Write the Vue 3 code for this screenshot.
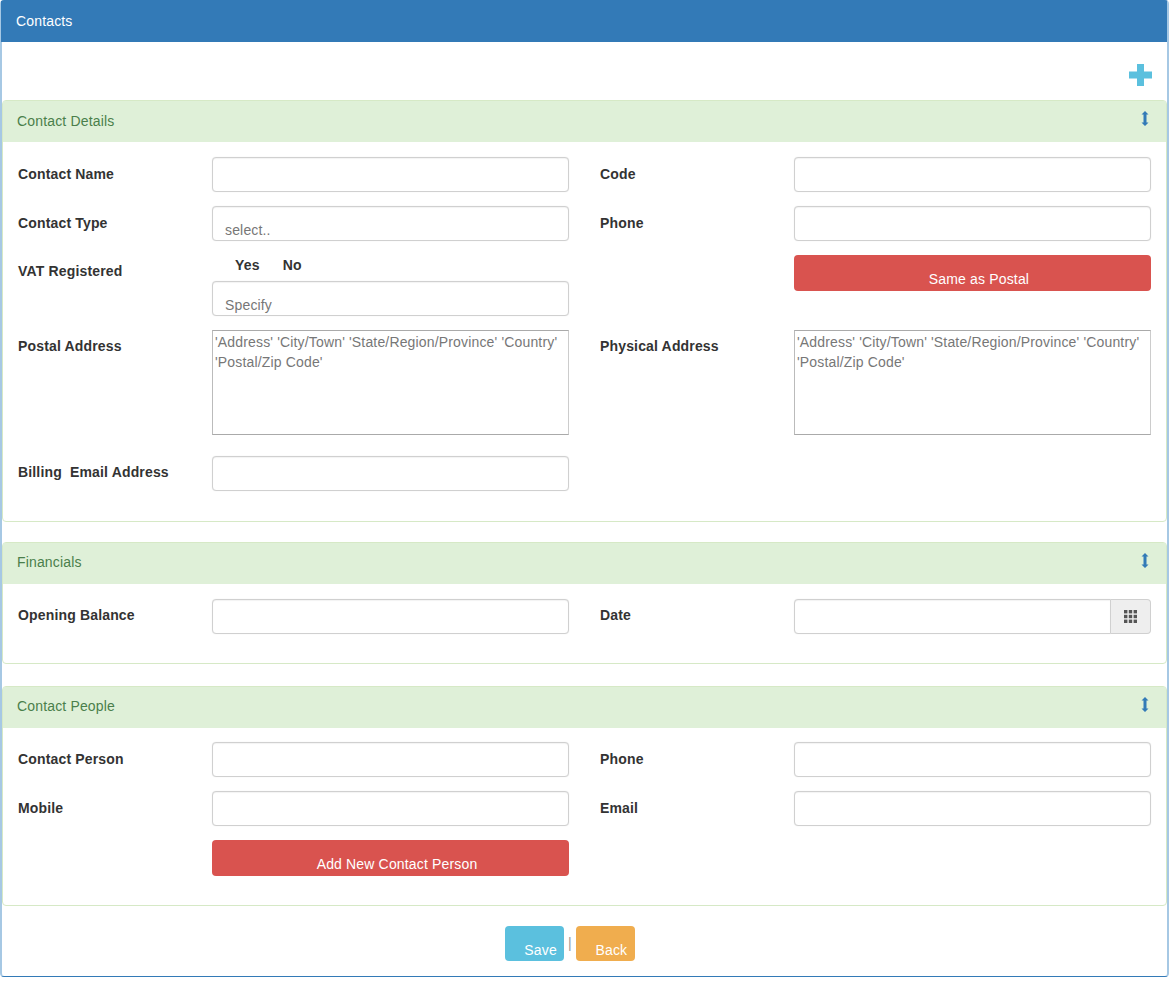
<template>
  <div class="panel">
    <div class="panel-head">Contacts</div>

    <div class="add-bar">
      <svg class="add-icon" width="23" height="22" viewBox="0 0 23 22">
        <path d="M8 0h7v7.500h8v7h-8V22H8v-7.500H0v-7h8z" fill="#5bc0de" />
      </svg>
    </div>

    <section class="sub-panel first">
      <div class="sub-head">
        <span class="sub-title">Contact Details</span>
        <svg class="toggle" width="8" height="15" viewBox="0 0 8 15">
          <path d="M4 0l3.500 3.600H5.500v7.800h2L4 15 .5 11.400h2V3.600h-2z" fill="#337ab7" />
        </svg>
      </div>
      <div class="sub-body">
        <div class="row">
          <div class="field">
            <label>Contact Name</label>
            <input class="text-input" type="text" />
          </div>
          <div class="field right">
            <label>Code</label>
            <input class="text-input" type="text" />
          </div>
        </div>
        <div class="row">
          <div class="field">
            <label>Contact Type</label>
            <input class="text-input low" type="text" placeholder="select.." />
          </div>
          <div class="field right">
            <label>Phone</label>
            <input class="text-input" type="text" />
          </div>
        </div>
        <div class="row">
          <div class="field">
            <label class="up">VAT Registered</label>
            <div>
              <div class="yes-no">
                <span>Yes</span>
                <span>No</span>
              </div>
              <input class="text-input low" type="text" placeholder="Specify" />
            </div>
          </div>
          <div class="field right">
            <span></span>
            <button class="btn btn-danger" type="button">Same as Postal</button>
          </div>
        </div>
        <div class="row address-row">
          <div class="field">
            <label class="up">Postal Address</label>
            <textarea class="area" :placeholder="addressHint"></textarea>
          </div>
          <div class="field right">
            <label class="up">Physical Address</label>
            <textarea class="area" :placeholder="addressHint"></textarea>
          </div>
        </div>
        <div class="row last">
          <div class="field">
            <label class="up">Billing&nbsp; Email Address</label>
            <input class="text-input" type="text" />
          </div>
        </div>
      </div>
    </section>

    <section class="sub-panel second">
      <div class="sub-head">
        <span class="sub-title">Financials</span>
        <svg class="toggle" width="8" height="15" viewBox="0 0 8 15">
          <path d="M4 0l3.500 3.600H5.500v7.800h2L4 15 .5 11.400h2V3.600h-2z" fill="#337ab7" />
        </svg>
      </div>
      <div class="sub-body">
        <div class="row last">
          <div class="field">
            <label class="up">Opening Balance</label>
            <input class="text-input" type="text" />
          </div>
          <div class="field right">
            <label class="up">Date</label>
            <div class="input-group">
              <input class="text-input" type="text" />
              <span class="addon">
                <svg width="13" height="13" viewBox="0 0 13 13" fill="#555">
                  <rect v-for="c in cells" :key="c.id" :x="c.x" :y="c.y" width="3.400" height="3.400" />
                </svg>
              </span>
            </div>
          </div>
        </div>
      </div>
    </section>

    <section class="sub-panel third">
      <div class="sub-head">
        <span class="sub-title">Contact People</span>
        <svg class="toggle" width="8" height="15" viewBox="0 0 8 15">
          <path d="M4 0l3.500 3.600H5.500v7.800h2L4 15 .5 11.400h2V3.600h-2z" fill="#337ab7" />
        </svg>
      </div>
      <div class="sub-body">
        <div class="row">
          <div class="field">
            <label>Contact Person</label>
            <input class="text-input" type="text" />
          </div>
          <div class="field right">
            <label>Phone</label>
            <input class="text-input" type="text" />
          </div>
        </div>
        <div class="row">
          <div class="field">
            <label>Mobile</label>
            <input class="text-input" type="text" />
          </div>
          <div class="field right">
            <label>Email</label>
            <input class="text-input" type="text" />
          </div>
        </div>
        <div class="row last">
          <div class="field">
            <span></span>
            <button class="btn btn-danger" type="button">Add New Contact Person</button>
          </div>
        </div>
      </div>
    </section>

    <div class="actions">
      <button class="btn btn-info" type="button">Save</button>
      <span class="sep">|</span>
      <button class="btn btn-warning" type="button">Back</button>
    </div>
  </div>
</template>

<script setup>
const addressHint =
  "'Address' 'City/Town' 'State/Region/Province' 'Country' 'Postal/Zip Code'";

// 3x3 squares of the calendar icon
const cells = [];
for (let row = 0; row < 3; row++) {
  for (let col = 0; col < 3; col++) {
    cells.push({ id: row * 3 + col, x: col * 4.8, y: row * 4.8 });
  }
}
</script>

<style>
html,
body {
  margin: 0;
  background: #fff;
}
</style>

<style scoped>
.panel {
  box-sizing: border-box;
  width: 1169px;
  height: 977px;
  border: 1px solid #337ab7;
  border-left: 2px solid #a6c8e4;
  border-right: 2px solid #a6c8e4;
  border-radius: 4px;
  background: #fff;
  font-family: "Liberation Sans", Arial, sans-serif;
  font-size: 14px;
  line-height: 20px;
  letter-spacing: 0.16px;
  color: #333;
}

.panel-head {
  height: 41px;
  margin-left: -1px;
  padding: 10px 15px 0;
  box-sizing: border-box;
  background: #337ab7;
  color: #fff;
}

.add-bar {
  display: flex;
  justify-content: flex-end;
  height: 58px;
  box-sizing: border-box;
  padding: 22px 15px 0 0;
}

.sub-panel {
  border: 1px solid #d6e9c6;
  border-radius: 4px;
}

.first {
  margin-bottom: 20px;
}

.second {
  margin-bottom: 22px;
}

.sub-head {
  display: flex;
  justify-content: space-between;
  align-items: center;
  height: 41px;
  padding: 0 14px;
  background: #dff0d8;
  color: #4a7f4b;
}

.sub-title {
  padding-bottom: 3px;
}

.first .sub-title {
  padding-bottom: 1px;
}

.toggle {
  margin: -7px 3px 0 0;
}

.sub-body {
  padding: 15px 14px 0;
}

.third .sub-body {
  padding-top: 14px;
}

.row {
  display: flex;
  gap: 31px;
  margin-bottom: 14px;
}

.address-row {
  margin-bottom: 21px;
}

.row.last {
  margin-bottom: 29px;
}

.first .row.last {
  margin-bottom: 30px;
}

.field {
  display: grid;
  grid-template-columns: 195px 357px;
  align-items: start;
}

.field.right {
  grid-template-columns: 194px 357px;
}

label {
  display: block;
  height: 35px;
  padding-left: 1px;
  line-height: 34px;
  font-weight: 700;
}

.right label {
  padding-left: 0;
}

label.up {
  line-height: 32px;
}

.text-input {
  display: block;
  box-sizing: border-box;
  width: 100%;
  height: 35px;
  padding: 0 12px;
  border: 1px solid #d0d0d0;
  border-radius: 4px;
  box-shadow: inset 0 1px 1px rgba(0, 0, 0, 0.05), 0 0 1px rgba(0, 0, 0, 0.12);
  font: inherit;
  letter-spacing: inherit;
  color: #555;
  background: #fff;
}

.text-input.low {
  padding-top: 13px;
}

.text-input::placeholder,
.area::placeholder {
  color: #777;
  opacity: 1;
}

.yes-no {
  display: flex;
  height: 26px;
  padding: 0 0 0 23px;
  gap: 23px;
  font-weight: 700;
}

.area {
  display: block;
  box-sizing: border-box;
  width: 100%;
  height: 105px;
  padding: 1px 2px;
  border: 1px solid;
  border-color: #aaa #ccc #aaa #bbb;
  border-radius: 0;
  font: inherit;
  letter-spacing: inherit;
  resize: none;
  outline: none;
}

.input-group {
  display: flex;
}

.input-group .text-input {
  flex: 1;
  min-width: 0;
  border-radius: 4px 0 0 4px;
}

.addon {
  display: flex;
  align-items: center;
  justify-content: center;
  box-sizing: border-box;
  width: 40px;
  height: 35px;
  border: 1px solid #d0d0d0;
  border-left: 0;
  border-radius: 0 4px 4px 0;
  background: #eee;
}

.btn {
  box-sizing: border-box;
  height: 36px;
  padding: 12px 0 0 13px;
  border: 0;
  border-radius: 4px;
  font: inherit;
  letter-spacing: inherit;
  line-height: 20px;
  color: #fff;
}

.btn-danger {
  width: 100%;
  background: #d9534f;
}

.btn-info,
.btn-warning {
  width: 59px;
  height: 35px;
  padding: 12px 0 0 12px;
}

.btn-info {
  background: #5bc0de;
}

.btn-warning {
  background: #f0ad4e;
}

.actions {
  display: flex;
  justify-content: center;
  align-items: flex-start;
  gap: 4px;
  padding: 20px 29px 0 0;
}

.sep {
  color: #999;
  margin-top: 7px;
}
</style>
